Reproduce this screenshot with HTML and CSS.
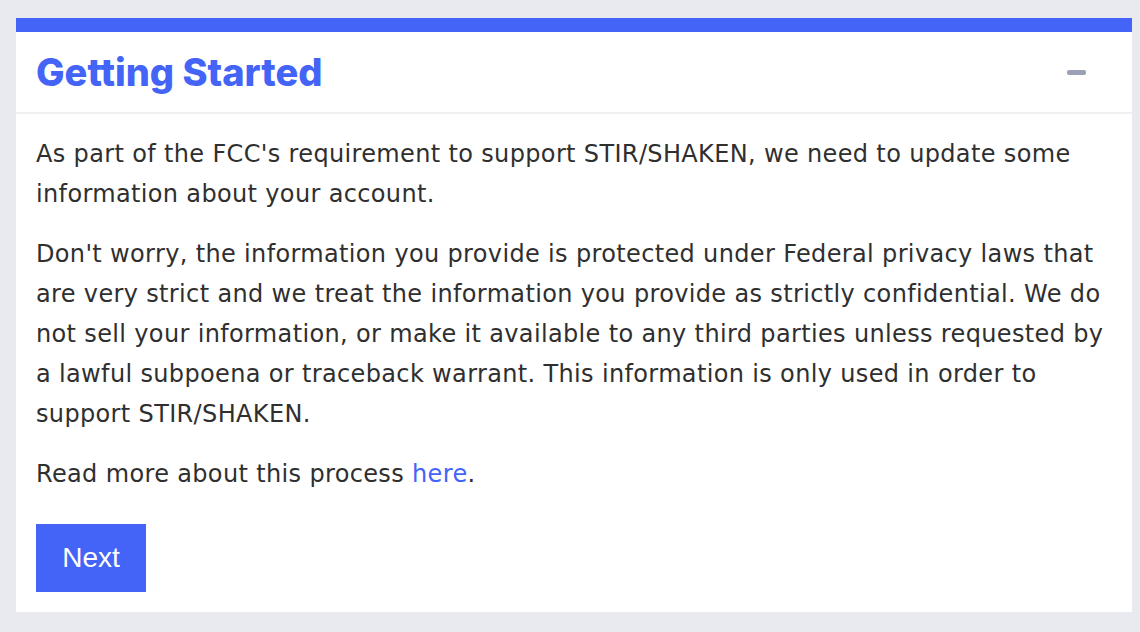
FILE: index.html
```html
<!DOCTYPE html>
<html lang="en">
<head>
<meta charset="utf-8">
<title>Getting Started</title>
<link rel="stylesheet" href="styles.css">
</head>
<body>
<main class="page">
  <section class="card">
    <header class="card-header">
      <h2 class="card-title">Getting Started</h2>
      <button class="collapse" type="button" aria-label="Collapse"><span class="minus"></span></button>
    </header>
    <div class="card-body">
      <p>As part of the FCC's requirement to support STIR/SHAKEN, we need to update some information about your account.</p>
      <p>Don't worry, the information you provide is protected under Federal privacy laws that are very strict and we treat the information you provide as strictly confidential. We do not sell your information, or make it available to any third parties unless requested by a lawful subpoena or traceback warrant. This information is only used in order to support STIR/SHAKEN.</p>
      <p>Read more about this process <a href="#">here</a>.</p>
      <button class="btn-next" type="button">Next</button>
    </div>
  </section>
</main>
</body>
</html>
```
FILE: styles.css
```css
html, body {
  margin: 0;
  padding: 0;
  background: #e9eaf0;
}
.page {
  padding: 18px 8px 20px 16px;
}
.card {
  background: #ffffff;
  border-top: 14px solid #4364f6;
}
.card-header {
  height: 80px;
  display: flex;
  align-items: center;
  justify-content: space-between;
  padding: 0 46px 0 20px;
  border-bottom: 2px solid #f0f0f3;
}
.card-title {
  margin: 0;
  font-family: "Inter", sans-serif;
  font-weight: 800;
  font-size: 38px;
  line-height: 1;
  color: #4364f6;
}
.collapse {
  border: 0;
  background: none;
  padding: 0;
  display: flex;
  cursor: pointer;
}
.minus {
  display: block;
  width: 19px;
  height: 5px;
  border-radius: 2px;
  background: #9aa0b5;
}
.card-body {
  padding: 20px 20px 20px 20px;
  font-family: "DejaVu Sans", sans-serif;
  font-size: 24px;
  letter-spacing: 0.35px;
  line-height: 40px;
  color: #2f2f2f;
}
.card-body p {
  margin: 0 0 20px 0;
}
.card-body a {
  color: #4364f6;
  text-decoration: none;
}
.btn-next {
  margin-top: 30px;
  display: block;
  width: 110px;
  height: 68px;
  border: 0;
  background: #4364f6;
  color: #ffffff;
  font-family: "Liberation Sans", Arial, sans-serif;
  font-size: 28px;
  letter-spacing: 0;
  cursor: pointer;
}
```
